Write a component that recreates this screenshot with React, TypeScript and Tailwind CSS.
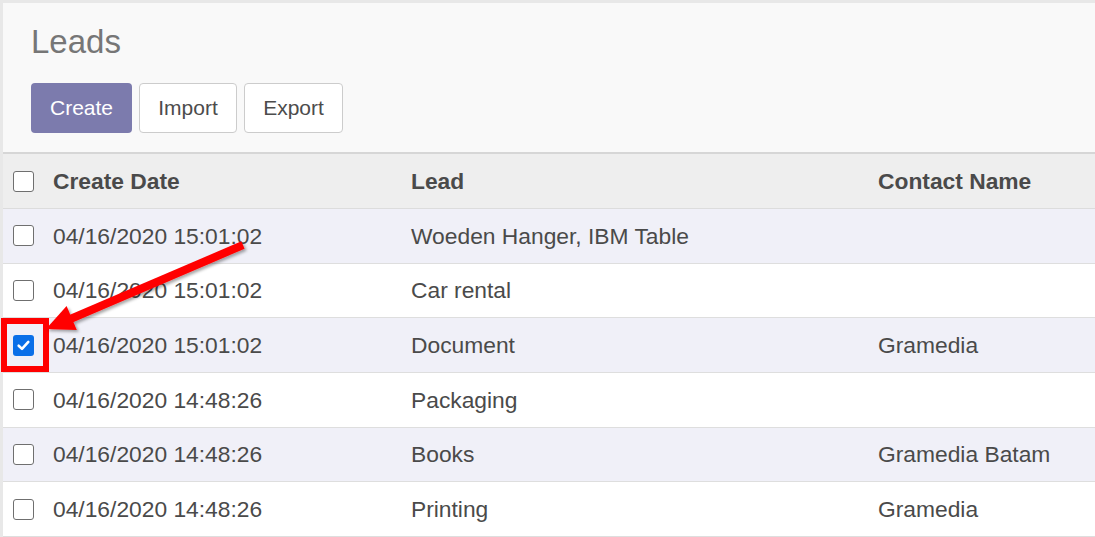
import React from "react";

const rows = [
  { date: "04/16/2020 15:01:02", lead: "Woeden Hanger, IBM Table", contact: "", checked: false },
  { date: "04/16/2020 15:01:02", lead: "Car rental", contact: "", checked: false },
  { date: "04/16/2020 15:01:02", lead: "Document", contact: "Gramedia", checked: true },
  { date: "04/16/2020 14:48:26", lead: "Packaging", contact: "", checked: false },
  { date: "04/16/2020 14:48:26", lead: "Books", contact: "Gramedia Batam", checked: false },
  { date: "04/16/2020 14:48:26", lead: "Printing", contact: "Gramedia", checked: false },
];

function Box({ checked }: { checked?: boolean }) {
  if (checked) {
    return (
      <div className="w-[21px] h-[21px] rounded-[3px] bg-[#0a6fe8] flex items-center justify-center">
        <svg width="15" height="15" viewBox="0 0 14 14">
          <path d="M2.5 7.2 L5.6 10.2 L11.5 3.6" fill="none" stroke="#fff" strokeWidth="2.4" strokeLinecap="round" strokeLinejoin="round" />
        </svg>
      </div>
    );
  }
  return <div className="w-[21px] h-[21px] rounded-[3px] border-[1.5px] border-[#6f6f6f] bg-white" />;
}

export default function App() {
  return (
    <div
      className="relative w-[1095px] h-[537px] bg-white border-t-[3px] border-l-[3px] border-[#e8e8e8] text-[#4a4a4a]"
      style={{ fontFamily: '"Liberation Sans", Arial, sans-serif' }}
    >
      <div className="h-[151px] bg-[#f9f9f9] border-b-2 border-[#d6d6d6] pl-[28px] pt-[22px]">
        <div className="text-[33px] leading-none text-[#767676]">Leads</div>
        <div className="mt-[25px] flex gap-[7px]">
          <button className="w-[101px] h-[50px] rounded-[4px] bg-[#7c7bad] text-white text-[21px]">Create</button>
          <button className="w-[98px] h-[50px] rounded-[4px] bg-white border border-[#cccccc] text-[#4c4c4c] text-[21px]">Import</button>
          <button className="w-[99px] h-[50px] rounded-[4px] bg-white border border-[#cccccc] text-[#4c4c4c] text-[21px]">Export</button>
        </div>
      </div>

      <div className="grid grid-cols-[50px_358px_467px_1fr] items-center h-[55px] bg-[#eeeeee] border-b border-[#dcdcdc] text-[22.8px] font-bold">
        <div className="pl-[10px]"><Box /></div>
        <div>Create Date</div>
        <div>Lead</div>
        <div>Contact Name</div>
      </div>

      {rows.map((r, i) => (
        <div
          key={i}
          className={`grid grid-cols-[50px_358px_467px_1fr] items-center h-[54.67px] border-b border-[#dedede] text-[22.8px] ${i % 2 === 0 ? "bg-[#f0f0f8]" : "bg-white"}`}
        >
          <div className="pl-[10px]"><Box checked={r.checked} /></div>
          <div>{r.date}</div>
          <div>{r.lead}</div>
          <div>{r.contact}</div>
        </div>
      ))}

      <div className="absolute left-[-2px] top-[315px] w-[48px] h-[54px] border-[6px] border-[#ff0000]" />

      <svg className="absolute left-[-3px] top-[-3px] pointer-events-none" width="1095" height="537" viewBox="0 0 1095 537">
        <defs>
          <filter id="sh" x="-20%" y="-20%" width="140%" height="140%">
            <feDropShadow dx="2" dy="2" stdDeviation="1.5" floodColor="#000" floodOpacity="0.35" />
          </filter>
        </defs>
        <g filter="url(#sh)">
          <line x1="243" y1="245" x2="68" y2="320" stroke="#ff0000" strokeWidth="8" />
          <polygon points="46,329 66.6,306.1 76.8,329.9" fill="#ff0000" />
        </g>
      </svg>
    </div>
  );
}
